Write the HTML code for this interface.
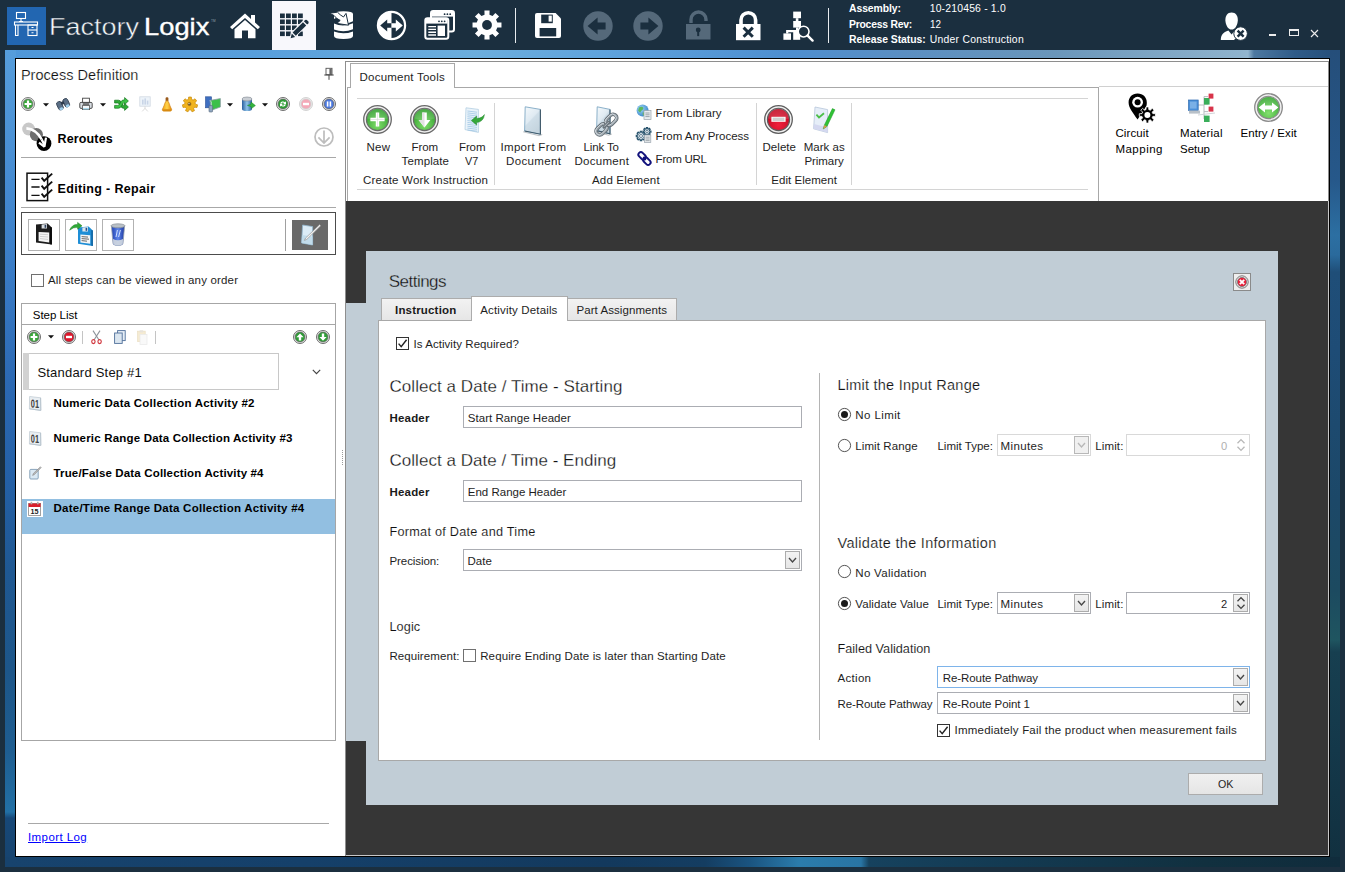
<!DOCTYPE html>
<html lang="en"><head><meta charset="utf-8"><title>FactoryLogix</title><style>
html,body{margin:0;padding:0;}
body{width:1345px;height:872px;overflow:hidden;background:#1b2f3f;position:relative;font-family:"Liberation Sans",sans-serif;}
div,span.t,svg{position:absolute;box-sizing:border-box;}
span.t{white-space:pre;display:block;}
svg{overflow:visible;}
</style></head><body>
<div style="left:5px;top:50px;width:1335px;height:817px;background:#2a65a8;"></div>
<div style="left:5px;top:50px;width:1335px;height:9px;background:linear-gradient(90deg,#4f97d9 0px,#589fdc 250px,#6caedd 470px,#5fa3dd 600px,#4e8fd0 780px,#5b8fc2 900px,#6a96ba 1050px,#8fb3cd 1235px,#93b6cf 1243px,#4d78a0 1249px,#2f5b88 1290px,#244d78 1335px);"></div>
<div style="left:5px;top:50px;width:11px;height:817px;background:linear-gradient(180deg,#569ddb 0px,#4a90d4 100px,#3a7cc6 220px,#2c69b3 330px,#2460a6 430px,#1f5892 520px,#1d5689 620px,#1e5d90 700px,#2270a5 762px,#174878 768px,#17436d 817px);"></div>
<div style="left:1330px;top:50px;width:10px;height:817px;background:linear-gradient(180deg,#254e7a 0px,#26588a 130px,#2c6fa2 185px,#2a6a9c 205px,#1f4e78 222px,#1e4c76 300px,#1c4868 450px,#1c4a60 540px,#1f5560 590px,#173f50 602px,#14384a 700px,#11303f 817px);"></div>
<div style="left:5px;top:857px;width:1335px;height:10px;background:linear-gradient(90deg,#17436d 0px,#15406a 300px,#13395d 600px,#143d61 700px,#1a5480 745px,#2b7cac 794px,#2975a4 856px,#16425e 864px,#133a52 1000px,#11303f 1200px,#102c3c 1335px);"></div>
<div style="left:15px;top:58px;width:1315px;height:799px;background:#000;"></div>
<div style="left:16px;top:59px;width:1313px;height:797px;background:#fff;"></div>
<div style="left:345px;top:61px;width:984px;height:795px;background:#8e8e8e;"></div>
<div style="left:346px;top:62px;width:982px;height:139px;background:#fff;"></div>
<div style="left:346px;top:201px;width:982px;height:654px;background:#363636;"></div>
<div style="left:1328px;top:201px;width:1px;height:655px;background:#c8c8c8;"></div>
<div style="left:346px;top:855px;width:983px;height:1px;background:#c8c8c8;"></div>
<div style="left:7px;top:7px;width:39px;height:38px;background:#2266b1;"></div>
<svg style="left:7px;top:7px" width="39" height="38" viewBox="0 0 39 38"><g fill="none" stroke="#fff" stroke-width="1.1"><rect x="9.5" y="5.5" width="9" height="6"/><path d="M14 11.5 V14.5 M12 14.5 H16"/><rect x="7.5" y="15" width="23" height="3"/><path d="M8.5 18 V28.5 H11 V18"/><rect x="21" y="18" width="9" height="10.5"/><path d="M21 23 H30"/><path d="M24.5 20.5 H26.5 M24.5 25.7 H26.5"/></g></svg>
<svg style="left:229px;top:12px" width="32" height="28" viewBox="0 0 32 28"><path d="M16 1.5 L1 15 L3.2 17.3 L16 6 L28.8 17.3 L31 15 L26 10.5 V3 H22 V7 Z" fill="#ffffff"/><path d="M16 8 L5.5 17.2 V26.2 H13 V18.5 H19 V26.2 H26.5 V17.2 Z" fill="#ffffff"/></svg>
<div style="left:272px;top:1px;width:44px;height:49px;background:#f8f8fc;"></div>
<svg style="left:279.5px;top:12.5px" width="30" height="27" viewBox="0 0 30 27"><rect x="0" y="0.5" width="4.8" height="4.6" fill="#1b2f3f"/><rect x="6" y="0.5" width="4.8" height="4.6" fill="#1b2f3f"/><rect x="12" y="0.5" width="4.8" height="4.6" fill="#1b2f3f"/><rect x="18" y="0.5" width="4.8" height="4.6" fill="#1b2f3f"/><rect x="0" y="6.5" width="4.8" height="4.6" fill="#1b2f3f"/><rect x="6" y="6.5" width="4.8" height="4.6" fill="#1b2f3f"/><rect x="12" y="6.5" width="4.8" height="4.6" fill="#1b2f3f"/><rect x="18" y="6.5" width="4.8" height="4.6" fill="#1b2f3f"/><rect x="0" y="12.5" width="4.8" height="4.6" fill="#1b2f3f"/><rect x="6" y="12.5" width="4.8" height="4.6" fill="#1b2f3f"/><rect x="12" y="12.5" width="4.8" height="4.6" fill="#1b2f3f"/><rect x="18" y="12.5" width="4.8" height="4.6" fill="#1b2f3f"/><rect x="0" y="18.5" width="4.8" height="4.6" fill="#1b2f3f"/><rect x="6" y="18.5" width="4.8" height="4.6" fill="#1b2f3f"/><rect x="12" y="18.5" width="4.8" height="4.6" fill="#1b2f3f"/><rect x="18" y="18.5" width="4.8" height="4.6" fill="#1b2f3f"/><path d="M9.5 26 L11 19.5 L24 6.5 L28.6 11 L15.6 24 Z" fill="#f8f8fc"/><path d="M10.6 25.3 L11.8 20.6 L15.2 24 Z" fill="#1b2f3f"/><path d="M12.6 19.6 L23 9.2 L26.2 12.4 L15.8 22.8 Z" fill="#1b2f3f"/><path d="M23.9 8.3 L25.2 7 Q26 6.3 26.8 7 L28.4 8.6 Q29 9.4 28.4 10.2 L27.1 11.5 Z" fill="#1b2f3f"/></svg>
<svg style="left:328px;top:10px" width="26" height="30" viewBox="0 0 26 30"><path d="M6 4 Q6 1.2 15.5 1.2 Q25 1.2 25 4 V11.2 Q20 14 14 13.4 L16.6 11.4 L13 9 L10.6 6.4 L6 9 Z" fill="#ffffff"/><path d="M6 13.5 Q15 17.5 25 13.2 V19.2 Q15.5 23 6 19.4 Z" fill="#ffffff"/><path d="M6 21.6 Q15.5 25.2 25 21.4 V26 Q25 29 15.5 29 Q6 29 6 26 Z" fill="#ffffff"/><path d="M1.5 3.2 L9.5 2.2 Q12 5 15.5 7 L18 3.4 L20.5 15.2 L8.8 13.4 L12.2 10.4 Q8 8.6 6.2 5.6 Z" fill="#ffffff" stroke="#1b2f3f" stroke-width="1"/></svg>
<svg style="left:376px;top:9.5px" width="31" height="31" viewBox="0 0 31 31"><circle cx="15.5" cy="15.5" r="13.6" fill="none" stroke="#ffffff" stroke-width="2.2"/><path d="M15.5 2 A13.5 13.5 0 0 0 15.5 29 Z" fill="#ffffff"/><path d="M4.2 15.5 L11.2 9.4 V13.2 H15.5 V17.8 H11.2 V21.6 Z" fill="#1b2f3f"/><path d="M26.8 15.5 L19.8 9.4 V13.2 H15.5 V17.8 H19.8 V21.6 Z" fill="#ffffff"/></svg>
<svg style="left:423.5px;top:10px" width="31" height="30" viewBox="0 0 31 30"><rect x="7" y="1" width="23" height="20.5" rx="2.2" fill="#1b2f3f" stroke="#ffffff" stroke-width="2"/><rect x="8" y="2" width="21" height="4.6" fill="#ffffff"/><circle cx="20.6" cy="4.2" r="0.9" fill="#1b2f3f"/><circle cx="23.4" cy="4.2" r="0.9" fill="#1b2f3f"/><circle cx="26.2" cy="4.2" r="0.9" fill="#1b2f3f"/><rect x="1.3" y="8.3" width="23" height="20.5" rx="2.2" fill="#1b2f3f" stroke="#ffffff" stroke-width="2"/><rect x="2" y="9" width="21.6" height="4.6" fill="#ffffff"/><circle cx="15" cy="11.3" r="0.9" fill="#1b2f3f"/><circle cx="17.8" cy="11.3" r="0.9" fill="#1b2f3f"/><circle cx="20.6" cy="11.3" r="0.9" fill="#1b2f3f"/><path d="M4.3 16.6 H12 M4.3 19.4 H12 M4.3 22.2 H12 M4.3 25 H12" stroke="#ffffff" stroke-width="1.4"/><rect x="13.6" y="15.6" width="7.4" height="10.4" fill="#ffffff"/></svg>
<svg style="left:472px;top:10px" width="30" height="30" viewBox="0 0 30 30"><path d="M12.43 0.53 L17.57 0.53 L17.46 4.69 L20.55 5.97 L23.41 2.95 L27.05 6.59 L24.03 9.45 L25.31 12.54 L29.47 12.43 L29.47 17.57 L25.31 17.46 L24.03 20.55 L27.05 23.41 L23.41 27.05 L20.55 24.03 L17.46 25.31 L17.57 29.47 L12.43 29.47 L12.54 25.31 L9.45 24.03 L6.59 27.05 L2.95 23.41 L5.97 20.55 L4.69 17.46 L0.53 17.57 L0.53 12.43 L4.69 12.54 L5.97 9.45 L2.95 6.59 L6.59 2.95 L9.45 5.97 L12.54 4.69 Z" fill="#ffffff"/><circle cx="15" cy="15" r="4.9" fill="#1b2f3f"/></svg>
<div style="left:514.6px;top:7.5px;width:1.3px;height:35.5px;background:#e8ecef;"></div>
<svg style="left:535px;top:13px" width="26" height="25" viewBox="0 0 26 25"><path d="M2 0 H20.6 L26 5.4 V23 Q26 25 24 25 H2 Q0 25 0 23 V2 Q0 0 2 0 Z" fill="#ffffff"/><rect x="6.2" y="1.6" width="11.6" height="8.6" fill="#1b2f3f"/><rect x="13.6" y="2.6" width="3.2" height="6" fill="#ffffff"/><rect x="4.6" y="15" width="16.6" height="8.4" fill="#1b2f3f"/></svg>
<svg style="left:583px;top:10.5px" width="30" height="30" viewBox="0 0 30 30"><circle cx="15" cy="15" r="14.7" fill="#55697a"/><path d="M4.6 15 L14.6 6.6 V11.4 H22.6 V18.6 H14.6 V23.4 Z" fill="#1b2f3f"/></svg>
<svg style="left:633px;top:10.5px" width="30" height="30" viewBox="0 0 30 30"><circle cx="15" cy="15" r="14.7" fill="#55697a"/><path d="M25.4 15 L15.4 6.6 V11.4 H7.4 V18.6 H15.4 V23.4 Z" fill="#1b2f3f"/></svg>
<svg style="left:686px;top:10.5px" width="25" height="29" viewBox="0 0 25 29"><path d="M5 12 V8.5 A7.5 7.5 0 0 1 20 8.5 V10" fill="none" stroke="#55697a" stroke-width="3.4"/><rect x="0" y="13" width="24.5" height="15.5" fill="#55697a"/><circle cx="12.2" cy="19" r="2.4" fill="#1b2f3f"/><rect x="11.2" y="19.5" width="2" height="5.6" fill="#1b2f3f"/></svg>
<svg style="left:736px;top:10.5px" width="25" height="30" viewBox="0 0 25 30"><path d="M5 14 V9 A7.3 7.3 0 0 1 19.6 9 V14" fill="none" stroke="#ffffff" stroke-width="3.6"/><rect x="0" y="13" width="24.5" height="16.2" fill="#ffffff"/><path d="M7.6 16.6 L16.8 25.8 M16.8 16.6 L7.6 25.8" stroke="#1b2f3f" stroke-width="3"/></svg>
<svg style="left:783px;top:10.5px" width="31" height="31" viewBox="0 0 31 31"><rect x="10.2" y="0.6" width="7.8" height="6.6" fill="#ffffff"/><rect x="12.8" y="7.2" width="2.6" height="3" fill="#ffffff"/><rect x="10.2" y="10" width="7.8" height="6.6" fill="#ffffff"/><path d="M14.1 16.6 V20 M4.2 22.6 V20.2 H16" stroke="#ffffff" stroke-width="2.2" fill="none"/><rect x="0.4" y="22.4" width="7.6" height="6.4" fill="#ffffff"/><rect x="10.2" y="20.6" width="7" height="8.2" fill="#ffffff"/><circle cx="20.6" cy="20.6" r="5.4" fill="#1b2f3f" stroke="#ffffff" stroke-width="1.6"/><path d="M24.6 24.6 L29.6 29.6" stroke="#ffffff" stroke-width="2.4" stroke-linecap="round"/></svg>
<div style="left:827.6px;top:7.5px;width:1.3px;height:35.5px;background:#e8ecef;"></div>
<svg style="left:1220px;top:12px" width="28" height="29" viewBox="0 0 28 29"><path d="M11.6 0.6 C7.4 0.6 5.2 4 5.4 8.4 C5.6 12.6 8 17.6 11.6 17.6 C15.2 17.6 17.6 12.6 17.8 8.4 C18 4 15.8 0.6 11.6 0.6 Z" fill="#ffffff"/><path d="M0.8 28 C1 22.6 3 20.4 8.4 18.4 L11.6 22.4 L14.8 18.4 C18 19.4 19 20 20.4 21.4 L14 28 Z" fill="#ffffff"/><circle cx="20.6" cy="21.6" r="6.8" fill="#ffffff" stroke="#1b2f3f" stroke-width="1"/><path d="M17.6 18.6 L23.6 24.6 M23.6 18.6 L17.6 24.6" stroke="#1b2f3f" stroke-width="2.4"/></svg>
<div style="left:1269px;top:34px;width:7.2px;height:2px;background:#ececec;"></div>
<div style="left:1289px;top:29px;width:9.6px;height:7.4px;border:1px solid #ececec;border-top-width:2px;"></div>
<svg style="left:1310px;top:28.5px" width="9" height="9" viewBox="0 0 9 9"><path d="M1 1 L8 8 M8 1 L1 8" stroke="#ececec" stroke-width="1.15"/></svg>
<svg style="left:324.4px;top:68px" width="10" height="12" viewBox="0 0 10 12"><rect x="2" y="0.3" width="6" height="6.4" fill="#fff" stroke="#555" stroke-width="0.9"/><rect x="5.4" y="0.6" width="2.4" height="6" fill="#666"/><path d="M0.3 7 H9.7 M5 7 V11.8" stroke="#444" stroke-width="1"/></svg>
<svg style="left:21px;top:97px" width="14" height="14" viewBox="0 0 14 14"><g opacity="1"><circle cx="7.0" cy="7.0" r="6.5" fill="#e9e9e9" stroke="#6e6e6e" stroke-width="0.9"/><circle cx="7.0" cy="7.0" r="4.9" fill="#3aa83a" stroke="#6e6e6e" stroke-width="0.7"/><path d="M7 3.6 V10.4 M3.6 7 H10.4" stroke="#fff" stroke-width="2.2"/></g></svg>
<svg style="left:42.5px;top:103px" width="6" height="4" viewBox="0 0 6 4"><path d="M0 0.3 H6 L3 3.6 Z" fill="#111"/></svg>
<svg style="left:56px;top:97px" width="14" height="14" viewBox="0 0 14 14"><g transform="rotate(-25 7 7)"><rect x="1" y="3" width="5" height="8.5" rx="2" fill="#5b6f86" stroke="#2e3c4e" stroke-width="0.8"/><rect x="8" y="3" width="5" height="8.5" rx="2" fill="#5b6f86" stroke="#2e3c4e" stroke-width="0.8"/><rect x="5.4" y="4.4" width="3.2" height="3" fill="#2e3c4e"/><ellipse cx="3.5" cy="10.6" rx="2" ry="1.4" fill="#9fd0ee"/><ellipse cx="10.5" cy="10.6" rx="2" ry="1.4" fill="#9fd0ee"/></g></svg>
<svg style="left:79px;top:97px" width="14" height="14" viewBox="0 0 14 14"><rect x="3.6" y="1.2" width="6.8" height="4.6" fill="#fff" stroke="#444" stroke-width="0.9"/><rect x="0.8" y="5.4" width="12.4" height="6" rx="1.2" fill="#d8dde2" stroke="#3c3c3c" stroke-width="0.9"/><rect x="3.4" y="8.6" width="7.2" height="4" fill="#f4f8fb" stroke="#555" stroke-width="0.8"/><rect x="3.8" y="6.3" width="6.4" height="1.5" fill="#555"/><rect x="4" y="11.2" width="6" height="1.2" fill="#9fd8ec"/></svg>
<svg style="left:100px;top:103px" width="6" height="4" viewBox="0 0 6 4"><path d="M0 0.3 H6 L3 3.6 Z" fill="#111"/></svg>
<svg style="left:113.5px;top:97px" width="15" height="14" viewBox="0 0 15 14"><path d="M0.6 3.2 H4.4 Q6.4 3.2 7.6 5.4 L8.6 7.2 Q9.4 8.8 10.6 8.8 V6.4 L14.4 10 L10.6 13.4 V11.4 Q7.6 11.4 6.6 9.4 L5.6 7.6 Q4.8 6 3.6 6 H0.6 Z" fill="#2faa36" stroke="#13751c" stroke-width="0.7"/><path d="M0.6 8.4 H3.6 Q4.8 8.4 5.6 7 L6.8 4.8 Q7.8 2.8 10.6 2.8 V0.6 L14.4 4 L10.6 7.6 V5.6 Q9.4 5.6 8.6 7 L7.6 9 Q6.4 11.2 4.4 11.2 H0.6 Z" fill="#3cc244" stroke="#13751c" stroke-width="0.7"/></svg>
<svg style="left:139px;top:96px" width="12" height="16" viewBox="0 0 12 16"><g opacity="0.55"><rect x="0.8" y="0.8" width="10.4" height="9.4" fill="#dfeaf5" stroke="#aebccd" stroke-width="0.8"/><rect x="3" y="3.6" width="1.6" height="5" fill="#9db4d4"/><rect x="5.4" y="2.4" width="1.6" height="6.2" fill="#9db4d4"/><rect x="7.8" y="4.6" width="1.6" height="4" fill="#9db4d4"/><path d="M6 10.2 V13 M6 12.4 L3.2 15.4 M6 12.4 L8.8 15.4" stroke="#b8b8b8" stroke-width="0.9" fill="none"/></g></svg>
<svg style="left:161px;top:97px" width="12" height="15" viewBox="0 0 12 15"><defs><linearGradient id="bl" x1="0" x2="1"><stop offset="0" stop-color="#f0a010"/><stop offset="0.5" stop-color="#ffd24a"/><stop offset="1" stop-color="#e88a08"/></linearGradient></defs><rect x="4.6" y="0.3" width="2.8" height="5" rx="1.2" fill="#9a5a1c"/><path d="M6 3.6 C3.6 4.6 3.6 8 2.2 10.6 Q1 12.6 1.4 13.2 H10.6 Q11 12.6 9.8 10.6 C8.4 8 8.4 4.6 6 3.6 Z" fill="url(#bl)" stroke="#c97a10" stroke-width="0.6"/><ellipse cx="6" cy="13.4" rx="4.6" ry="1.2" fill="#d88a10"/></svg>
<svg style="left:182px;top:97px" width="16" height="15" viewBox="0 0 16 15"><path d="M6.64 0.02 L9.36 0.02 L9.53 2.32 L11.10 3.08 L13.00 1.78 L14.69 3.90 L13.00 5.47 L13.39 7.16 L15.59 7.84 L14.99 10.49 L12.71 10.14 L11.63 11.50 L12.47 13.65 L10.02 14.83 L8.87 12.83 L7.13 12.83 L5.98 14.83 L3.53 13.65 L4.37 11.50 L3.29 10.14 L1.01 10.49 L0.41 7.84 L2.61 7.16 L3.00 5.47 L1.31 3.90 L3.00 1.78 L4.90 3.08 L6.47 2.32 Z" fill="#f0b420" stroke="#c98a0a" stroke-width="0.7"/><circle cx="7.4" cy="7" r="1.7" fill="#6e5a30" stroke="#b87a08" stroke-width="0.6"/><circle cx="7" cy="6.6" r="0.7" fill="#fff4d0"/></svg>
<svg style="left:204.5px;top:96px" width="17" height="17" viewBox="0 0 17 17"><rect x="0.5" y="0.8" width="6" height="11" fill="#3f6fc0" stroke="#2a4f96" stroke-width="0.6"/><path d="M5 4.4 L15.4 2.6 V11 L6.4 14.2 Z" fill="#3cc04a" stroke="#8ea0a8" stroke-width="0.8"/><path d="M5 4.4 L6.4 6 V14.2" fill="none" stroke="#dfe8ea" stroke-width="0.7"/><rect x="4" y="9.6" width="3.6" height="6.4" rx="0.8" fill="#8fa6c0" stroke="#55677a" stroke-width="0.6"/></svg>
<svg style="left:227px;top:103px" width="6" height="4" viewBox="0 0 6 4"><path d="M0 0.3 H6 L3 3.6 Z" fill="#111"/></svg>
<svg style="left:241px;top:96px" width="15" height="16" viewBox="0 0 15 16"><defs><linearGradient id="dbg" x1="0" x2="1"><stop offset="0" stop-color="#2d5f9e"/><stop offset="0.5" stop-color="#8fc4ea"/><stop offset="1" stop-color="#2d5f9e"/></linearGradient></defs><path d="M1 3 V13 Q1 15 6 15 Q11 15 11 13 V3 Z" fill="url(#dbg)"/><ellipse cx="6" cy="3" rx="5" ry="2" fill="#c9ced4" stroke="#7c858f" stroke-width="0.6"/><path d="M6.4 9.4 L10 8.2 V6 L14.4 9.6 L10.4 12.6 V10.8 Z" fill="#34b53e" stroke="#1c8a28" stroke-width="0.5"/></svg>
<svg style="left:262px;top:103px" width="6" height="4" viewBox="0 0 6 4"><path d="M0 0.3 H6 L3 3.6 Z" fill="#111"/></svg>
<svg style="left:276px;top:97px" width="14" height="14" viewBox="0 0 14 14"><g opacity="1"><circle cx="7.0" cy="7.0" r="6.5" fill="#e9e9e9" stroke="#5e5e5e" stroke-width="0.9"/><circle cx="7.0" cy="7.0" r="4.9" fill="#2e9e36" stroke="#5e5e5e" stroke-width="0.7"/><path d="M4.2 6.2 A3 3 0 0 1 9 5.2 L10 4.2 V7.2 H7 L8.1 6.1 A1.8 1.8 0 0 0 5.4 6.6 Z M9.8 7.8 A3 3 0 0 1 5 8.8 L4 9.8 V6.8 H7 L5.9 7.9 A1.8 1.8 0 0 0 8.6 7.4 Z" fill="#fff"/></g></svg>
<svg style="left:299px;top:97px" width="14" height="14" viewBox="0 0 14 14"><g opacity="1"><circle cx="7.0" cy="7.0" r="6.5" fill="#e9e9e9" stroke="#cfcfcf" stroke-width="0.9"/><circle cx="7.0" cy="7.0" r="4.9" fill="#f4a9b8" stroke="#cfcfcf" stroke-width="0.7"/><rect x="4" y="5.8" width="6" height="2.4" fill="#fff"/></g></svg>
<svg style="left:322px;top:97px" width="14" height="14" viewBox="0 0 14 14"><g opacity="1"><circle cx="7.0" cy="7.0" r="6.5" fill="#e9e9e9" stroke="#5e5e5e" stroke-width="0.9"/><circle cx="7.0" cy="7.0" r="4.9" fill="#4a78e0" stroke="#5e5e5e" stroke-width="0.7"/><rect x="4.8" y="4.4" width="1.6" height="5.2" fill="#fff"/><rect x="7.6" y="4.4" width="1.6" height="5.2" fill="#fff"/></g></svg>
<svg style="left:22px;top:121.5px" width="30" height="30" viewBox="0 0 30 30"><circle cx="6.6" cy="7" r="6.4" fill="#c8c8c8"/><circle cx="14.4" cy="12.6" r="6.6" fill="#6e6e6e"/><circle cx="22" cy="21.6" r="7.4" fill="#000"/><path d="M4.4 6.4 Q14 7 19.6 17.4" fill="none" stroke="#fff" stroke-width="2.6"/><path d="M24 15.6 L22.4 24.8 M17 20.6 L22.6 25" fill="none" stroke="#fff" stroke-width="2.2"/><path d="M19.6 17.4 Q21.6 20.6 22.2 23.6" fill="none" stroke="#fff" stroke-width="2.4"/></svg>
<svg style="left:314px;top:127px" width="20" height="20" viewBox="0 0 20 20"><circle cx="10" cy="10" r="9" fill="none" stroke="#bdbdbd" stroke-width="1.7"/><path d="M10 3.6 V15.6 M4.4 10.4 L10 16 L15.6 10.4" fill="none" stroke="#bdbdbd" stroke-width="1.7"/></svg>
<div style="left:21px;top:157px;width:315px;height:1px;background:#a8a8a8;"></div>
<svg style="left:25.5px;top:172px" width="27" height="30" viewBox="0 0 27 30"><rect x="1" y="1.2" width="20.6" height="27.4" fill="#fff" stroke="#111" stroke-width="1.5"/><path d="M5.4 7.4 H13.6 M5.4 15 H13.6 M5.4 23.4 H13.6" stroke="#111" stroke-width="1.3"/><path d="M15.6 5.6 L18.2 8.8 L26.2 1.6 M15.6 13.6 L18.2 16.8 L26.2 9.6 M15.6 21.6 L18.2 24.8 L26.2 17.6" fill="none" stroke="#111" stroke-width="1.9"/></svg>
<div style="left:21px;top:207px;width:315px;height:1px;background:#a8a8a8;"></div>
<div style="left:21px;top:212px;width:315px;height:43px;background:#fff;border:1px solid #4c4c4c;"></div>
<div style="left:28px;top:219px;width:32px;height:32px;background:#fff;border:1px solid #b2b2b2;"></div>
<div style="left:65px;top:219px;width:32px;height:32px;background:#fff;border:1px solid #b2b2b2;"></div>
<div style="left:102px;top:219px;width:32px;height:32px;background:#fff;border:1px solid #b2b2b2;"></div>
<svg style="left:35px;top:223px" width="18" height="23" viewBox="0 0 18 23"><path d="M1 1.6 L12.6 0.6 L16.8 4.4 V21.6 L1 19.4 Z" fill="#1c1c1c"/><path d="M16.8 4.4 V21.6 L15.4 21.4 V4 Z" fill="#000"/><path d="M3.6 9 L14.2 9.6 V19.4 L3.6 18 Z" fill="#f4f4f4"/><path d="M5 11.2 L13 11.7 M5 13.4 L13 14 M5 15.6 L13 16.4" stroke="#bbb" stroke-width="0.7"/><path d="M6.6 1.4 L12 1 V5.6 L6.6 5.6 Z" fill="#d8dde2"/><rect x="9.6" y="1.8" width="1.6" height="3" fill="#2c3f5a"/></svg>
<svg style="left:69px;top:222px" width="26" height="25" viewBox="0 0 26 25"><path d="M9 5.6 L19.6 4.6 L23.8 8.4 V24 L9 21.8 Z" fill="#1e8ed6"/><path d="M23.8 8.4 V24 L22.4 23.8 V8 Z" fill="#0d5e9a"/><path d="M11.4 12.6 L21.2 13.2 V21.8 L11.4 20.4 Z" fill="#f6f6f6"/><path d="M12.6 14.6 L19 15.1 M12.6 16.6 L20 17.2 M12.6 18.6 L18 19.2" stroke="#444" stroke-width="0.8"/><path d="M13.4 5.4 L19 5 V9.6 L13.4 9.6 Z" fill="#dfe6ec"/><rect x="16.6" y="5.8" width="1.6" height="3" fill="#1c4f8a"/><path d="M0.6 8.2 Q3 2.2 8.6 2.4 V0.4 L13 3.8 L8.6 7.2 V5.4 Q4.4 5 0.6 8.2 Z" fill="#2faa36" stroke="#1c7a24" stroke-width="0.5"/></svg>
<svg style="left:110px;top:222.5px" width="16" height="24" viewBox="0 0 16 24"><defs><linearGradient id="tb" x1="0" x2="1"><stop offset="0" stop-color="#1f3fb0"/><stop offset="0.5" stop-color="#5f86ea"/><stop offset="1" stop-color="#1a36a0"/></linearGradient></defs><path d="M1.4 3 L3 20.4 Q3.2 22.4 8 22.4 Q12.8 22.4 13 20.4 L14.6 3 Z" fill="url(#tb)" stroke="#9aa4ae" stroke-width="0.8"/><ellipse cx="8" cy="2.8" rx="7" ry="2" fill="#b9c0c6" stroke="#858d95" stroke-width="0.7"/><path d="M3 16 Q8 18.4 13 16 L12.8 20.4 Q12.6 22.2 8 22.2 Q3.4 22.2 3.2 20.4 Z" fill="#d4dae0" opacity="0.9"/><path d="M7.4 7 L6 14 M10.4 7 L8.6 14" stroke="#cfe0ff" stroke-width="1"/></svg>
<div style="left:285px;top:219px;width:1px;height:32px;background:#a0a0a0;"></div>
<div style="left:292px;top:220px;width:36px;height:30px;background:#696969;"></div>
<svg style="left:300px;top:223px" width="22" height="24" viewBox="0 0 22 24"><path d="M2.6 2 L12.6 3.6 V22 L1.6 20 Z" fill="#dcecf6" stroke="#8fb4cc" stroke-width="0.8"/><path d="M2 12 L12.6 13.6 V22 L1.6 20 Z" fill="#bcd8e8" opacity="0.8"/><path d="M4.4 17.4 L5.6 15 L19.6 1.6 L20.8 2.8 L6.8 16.4 Z" fill="#f0f0f0" stroke="#8a8a8a" stroke-width="0.6"/></svg>
<div style="left:31px;top:274px;width:13px;height:13px;background:#fff;border:1px solid #707070;"></div>
<div style="left:21px;top:303px;width:315px;height:438px;background:#fff;border:1px solid #a6a6a6;"></div>
<div style="left:21px;top:324px;width:315px;height:1px;background:#a6a6a6;"></div>
<svg style="left:27px;top:330px" width="14" height="14" viewBox="0 0 14 14"><g opacity="1"><circle cx="7.0" cy="7.0" r="6.5" fill="#e9e9e9" stroke="#5e5e5e" stroke-width="0.9"/><circle cx="7.0" cy="7.0" r="4.9" fill="#3aa83a" stroke="#5e5e5e" stroke-width="0.7"/><path d="M7 3.6 V10.4 M3.6 7 H10.4" stroke="#fff" stroke-width="2.2"/></g></svg>
<svg style="left:48px;top:335.4px" width="6" height="4" viewBox="0 0 6 4"><path d="M0 0.3 H6 L3 3.6 Z" fill="#111"/></svg>
<svg style="left:62px;top:330px" width="14" height="14" viewBox="0 0 14 14"><g opacity="1"><circle cx="7.0" cy="7.0" r="6.5" fill="#e9e9e9" stroke="#5e5e5e" stroke-width="0.9"/><circle cx="7.0" cy="7.0" r="4.9" fill="#e0162b" stroke="#5e5e5e" stroke-width="0.7"/><rect x="4" y="5.8" width="6" height="2.4" fill="#fff"/></g></svg>
<div style="left:82px;top:331px;width:1px;height:13px;background:#c4c4c4;"></div>
<svg style="left:90.5px;top:330px" width="11" height="14" viewBox="0 0 11 14"><path d="M2 0.6 L8 10 M9 0.6 L3 10" stroke="#8e959c" stroke-width="1.1" fill="none"/><ellipse cx="2.4" cy="11.6" rx="1.7" ry="2" fill="none" stroke="#d0343c" stroke-width="1.1"/><ellipse cx="8.6" cy="11.6" rx="1.7" ry="2" fill="none" stroke="#d0343c" stroke-width="1.1"/></svg>
<svg style="left:114px;top:330px" width="12" height="14" viewBox="0 0 12 14"><rect x="3.6" y="0.6" width="7.6" height="10" fill="#e6eef6" stroke="#4f6f9a" stroke-width="0.9"/><rect x="0.6" y="3" width="7.6" height="10.4" fill="#dbe6f0" stroke="#4f6f9a" stroke-width="0.9"/></svg>
<svg style="left:137px;top:329.5px" width="11" height="15" viewBox="0 0 11 15"><g opacity="0.5"><rect x="0.6" y="1.2" width="7.6" height="10.4" fill="#ecd9a6" stroke="#d8c08a" stroke-width="0.7"/><rect x="2.6" y="0.3" width="3.6" height="2" fill="#d0c8b8"/><rect x="3" y="4.4" width="7" height="10" fill="#f4f4f4" stroke="#d4d4d4" stroke-width="0.7"/></g></svg>
<div style="left:155px;top:331px;width:1px;height:13px;background:#c4c4c4;"></div>
<svg style="left:293px;top:330px" width="14" height="14" viewBox="0 0 14 14"><g opacity="1"><circle cx="7.0" cy="7.0" r="6.5" fill="#e9e9e9" stroke="#5e5e5e" stroke-width="0.9"/><circle cx="7.0" cy="7.0" r="4.9" fill="#2e9e36" stroke="#5e5e5e" stroke-width="0.7"/><path d="M7 3.4 L10.6 7.2 H8.2 V10.6 H5.8 V7.2 H3.4 Z" fill="#fff"/></g></svg>
<svg style="left:316px;top:330px" width="14" height="14" viewBox="0 0 14 14"><g opacity="1"><circle cx="7.0" cy="7.0" r="6.5" fill="#e9e9e9" stroke="#5e5e5e" stroke-width="0.9"/><circle cx="7.0" cy="7.0" r="4.9" fill="#2e9e36" stroke="#5e5e5e" stroke-width="0.7"/><path d="M7 10.8 L10.6 7 H8.2 V3.6 H5.8 V7 H3.4 Z" fill="#fff"/></g></svg>
<div style="left:23px;top:353px;width:256px;height:37px;background:#fff;border:1px solid #c8c8c8;"></div>
<div style="left:23px;top:353px;width:6px;height:37px;background:#d2d2d2;"></div>
<svg style="left:312px;top:369px" width="9" height="6" viewBox="0 0 9 6"><path d="M0.8 0.8 L4.5 4.6 L8.2 0.8" fill="none" stroke="#444" stroke-width="1.15"/></svg>
<svg style="left:29px;top:396px" width="13" height="15" viewBox="0 0 13 15"><path d="M0.6 0.5 L11.6 1.8 L11.8 14.4 L0.4 12.8 Z" fill="#e9eef2" stroke="#c4ced6" stroke-width="0.8"/><path d="M11.6 1.8 L11.8 14.4 L0.4 12.8" fill="none" stroke="#b4c2cc" stroke-width="0.9"/><text x="1.8" y="11.4" style="font-family:Liberation Sans,sans-serif;font-size:11.5px;font-weight:bold" fill="#3c3c3c" textLength="8.2" lengthAdjust="spacingAndGlyphs" transform="skewY(4)">01</text></svg>
<svg style="left:29px;top:431px" width="13" height="15" viewBox="0 0 13 15"><path d="M0.6 0.5 L11.6 1.8 L11.8 14.4 L0.4 12.8 Z" fill="#e9eef2" stroke="#c4ced6" stroke-width="0.8"/><path d="M11.6 1.8 L11.8 14.4 L0.4 12.8" fill="none" stroke="#b4c2cc" stroke-width="0.9"/><text x="1.8" y="11.4" style="font-family:Liberation Sans,sans-serif;font-size:11.5px;font-weight:bold" fill="#3c3c3c" textLength="8.2" lengthAdjust="spacingAndGlyphs" transform="skewY(4)">01</text></svg>
<svg style="left:29px;top:466px" width="13" height="14" viewBox="0 0 13 14"><rect x="0.8" y="3.4" width="8.4" height="9.6" rx="1" fill="#dbe9f4" stroke="#7d9ab4" stroke-width="0.9"/><path d="M3.6 9.4 L4.4 7.4 L11.4 0.8 L12.2 1.6 L5.4 8.6 Z" fill="#b8b8b8" stroke="#8a8a8a" stroke-width="0.6"/></svg>
<div style="left:22px;top:499px;width:313px;height:35px;background:#92bfe1;"></div>
<svg style="left:27px;top:501px" width="16" height="16" viewBox="0 0 16 16"><rect x="0" y="0" width="16" height="16" fill="#fff"/><rect x="1.6" y="2.4" width="12" height="12" fill="#fff" stroke="#8a8a8a" stroke-width="0.8"/><rect x="1.6" y="2.4" width="12" height="3.6" fill="#d8202c"/><rect x="3.6" y="0.8" width="1.6" height="2.6" fill="#b0b0b0"/><rect x="10" y="0.8" width="1.6" height="2.6" fill="#b0b0b0"/><text x="3.6" y="13" style="font-family:Liberation Sans,sans-serif;font-size:7.6px;font-weight:bold" fill="#222" textLength="8" lengthAdjust="spacingAndGlyphs">15</text></svg>
<div style="left:28px;top:823px;width:301px;height:1px;background:#a8a8a8;"></div>
<div style="left:342px;top:450px;width:1px;height:15px;background:repeating-linear-gradient(#9a9a9a 0 1px,#fff 1px 2px);"></div>
<div style="left:347px;top:87px;width:752px;height:114px;background:#fff;border:1px solid #a8a8a8;border-bottom:none;"></div>
<div style="left:350px;top:63px;width:105px;height:25px;background:#fff;border:1px solid #a8a8a8;border-bottom:none;"></div>
<div style="left:1099px;top:86px;width:229px;height:115px;background:#fff;border-top:1px solid #d0d0d0;"></div>
<div style="left:357px;top:98px;width:731px;height:1px;background:#d4d4d4;"></div>
<div style="left:357px;top:189px;width:731px;height:1px;background:#d4d4d4;"></div>
<div style="left:494px;top:103px;width:1px;height:82px;background:#d4d4d4;"></div>
<div style="left:756px;top:103px;width:1px;height:82px;background:#d4d4d4;"></div>
<div style="left:851px;top:103px;width:1px;height:82px;background:#d4d4d4;"></div>
<svg style="left:363px;top:105px" width="29" height="29" viewBox="0 0 29 29"><defs><radialGradient id="g363" cx="0.5" cy="0.75" r="0.7"><stop offset="0" stop-color="#7fdc6a"/><stop offset="1" stop-color="#2f9e2c"/></radialGradient></defs><circle cx="14.5" cy="14.5" r="13.8" fill="#f0f0f0" stroke="#6a6a6a" stroke-width="1.3"/><circle cx="14.5" cy="14.5" r="11.1" fill="url(#g363)" stroke="#6a6a6a" stroke-width="1.1"/><path d="M4.199999999999999 13.5 A10.3 10.3 0 0 1 24.8 13.5 Q14.5 17.0 4.199999999999999 13.5 Z" fill="#fff" opacity="0.13"/><path d="M14.5 7.4 V21.6 M7.4 14.5 H21.6" stroke="#fff" stroke-width="3.4"/><path d="M14.5 8 V21 M8 14.5 H21" stroke="#d8d8d8" stroke-width="0.6"/></svg>
<svg style="left:410px;top:105px" width="29" height="29" viewBox="0 0 29 29"><defs><radialGradient id="g410" cx="0.5" cy="0.75" r="0.7"><stop offset="0" stop-color="#7fdc6a"/><stop offset="1" stop-color="#2f9e2c"/></radialGradient></defs><circle cx="14.5" cy="14.5" r="13.8" fill="#f0f0f0" stroke="#6a6a6a" stroke-width="1.3"/><circle cx="14.5" cy="14.5" r="11.1" fill="url(#g410)" stroke="#6a6a6a" stroke-width="1.1"/><path d="M4.199999999999999 13.5 A10.3 10.3 0 0 1 24.8 13.5 Q14.5 17.0 4.199999999999999 13.5 Z" fill="#fff" opacity="0.13"/><path d="M14.5 22.4 L8.6 15 H12.2 V7.4 H16.8 V15 H20.4 Z" fill="#fff"/><path d="M14.5 22.4 L8.6 15 H12.2 V7.4 H14.5 Z" fill="#e2e2e2"/></svg>
<svg style="left:464px;top:106.5px" width="22" height="27" viewBox="0 0 22 27"><path d="M2 0.8 L14.4 2.4 V25.4 L1 22.6 Z" fill="#eaf3fa" stroke="#b4cfe2" stroke-width="0.8"/><path d="M3.4 4.0 L13 5.2" stroke="#9fc6e4" stroke-width="0.8"/><path d="M3.4 5.9 L13 7.1" stroke="#9fc6e4" stroke-width="0.8"/><path d="M3.4 7.8 L13 9.0" stroke="#9fc6e4" stroke-width="0.8"/><path d="M3.4 9.7 L13 10.9" stroke="#9fc6e4" stroke-width="0.8"/><path d="M3.4 11.6 L13 12.8" stroke="#9fc6e4" stroke-width="0.8"/><path d="M3.4 13.5 L13 14.7" stroke="#9fc6e4" stroke-width="0.8"/><path d="M3.4 15.4 L13 16.6" stroke="#9fc6e4" stroke-width="0.8"/><path d="M3.4 17.3 L13 18.5" stroke="#9fc6e4" stroke-width="0.8"/><path d="M3.4 19.2 L13 20.4" stroke="#9fc6e4" stroke-width="0.8"/><path d="M3.4 21.1 L13 22.3" stroke="#9fc6e4" stroke-width="0.8"/><path d="M3.4 23.0 L13 24.2" stroke="#9fc6e4" stroke-width="0.8"/><path d="M7.4 13.6 L12.6 9 V11.4 Q17.6 11.6 20.4 7.6 Q19.6 14.8 12.6 15.6 V18 Z" fill="#35a83a" stroke="#1f8428" stroke-width="0.5"/></svg>
<svg style="left:523px;top:105.5px" width="26" height="31" viewBox="0 0 26 31"><defs><linearGradient id="dc523" x1="0" y1="0" x2="0.6" y2="1"><stop offset="0" stop-color="#f4f9fc"/><stop offset="0.5" stop-color="#dfeaf2"/><stop offset="0.55" stop-color="#cfdee8"/><stop offset="1" stop-color="#c4d4de"/></linearGradient></defs><path d="M0.2 25.8 L16 29.6 L19.2 28.4" fill="none" stroke="#8c9499" stroke-width="1.1" opacity="0.55"/><path d="M2.2 0.8 L17.4 3.4 V28.2 L1.6 25 Z" fill="url(#dc523)" stroke="#7fa8c4" stroke-width="0.9"/><path d="M17.4 3.4 V28.2 L1.6 25" fill="none" stroke="#3f5868" stroke-width="1.1"/></svg>
<svg style="left:595px;top:105.5px" width="23.6" height="30.6" viewBox="0 0 23.6 30.6"><defs><linearGradient id="dc595" x1="0" y1="0" x2="0.6" y2="1"><stop offset="0" stop-color="#f4f9fc"/><stop offset="0.5" stop-color="#dfeaf2"/><stop offset="0.55" stop-color="#cfdee8"/><stop offset="1" stop-color="#c4d4de"/></linearGradient></defs><path d="M0.2 25.400000000000002 L13.6 29.200000000000003 L16.8 28.0" fill="none" stroke="#8c9499" stroke-width="1.1" opacity="0.55"/><path d="M2.2 0.8 L15.0 3.4 V27.8 L1.6 24.6 Z" fill="url(#dc595)" stroke="#7fa8c4" stroke-width="0.9"/><path d="M15.0 3.4 V27.8 L1.6 24.6" fill="none" stroke="#3f5868" stroke-width="1.1"/><g transform="rotate(-45 6.6 23.4)" fill="none"><rect x="0.2999999999999998" y="19.7" width="12.6" height="7.4" rx="3.7" stroke="#5a646b" stroke-width="3.6"/><rect x="0.2999999999999998" y="19.7" width="12.6" height="7.4" rx="3.7" stroke="#98a2a9" stroke-width="2.2"/><rect x="-1.6653345369377348e-16" y="19.2" width="12.6" height="7.4" rx="3.7" stroke="#d3dadf" stroke-width="0.9"/></g><g transform="rotate(-45 16.2 13.8)" fill="none"><rect x="9.899999999999999" y="10.100000000000001" width="12.6" height="7.4" rx="3.7" stroke="#5a646b" stroke-width="3.6"/><rect x="9.899999999999999" y="10.100000000000001" width="12.6" height="7.4" rx="3.7" stroke="#98a2a9" stroke-width="2.2"/><rect x="9.599999999999998" y="9.600000000000001" width="12.6" height="7.4" rx="3.7" stroke="#d3dadf" stroke-width="0.9"/></g><path d="M9 21 L13.8 16.2" stroke="#6a747b" stroke-width="3.2" stroke-linecap="round"/><path d="M9.4 20.4 L13.4 16.4" stroke="#b4bdc3" stroke-width="1" stroke-linecap="round"/></svg>
<svg style="left:636px;top:104px" width="16" height="16" viewBox="0 0 16 16"><defs><radialGradient id="gl" cx="0.35" cy="0.35" r="0.8"><stop offset="0" stop-color="#9fd8f4"/><stop offset="1" stop-color="#2a78c4"/></radialGradient></defs><circle cx="6.6" cy="6.6" r="6" fill="url(#gl)"/><path d="M3 3.6 Q5 2 7 3.2 Q8 5 6.4 6 Q4.6 6.6 4.4 8.6 Q3 8 2.2 6.4 Z M6.6 8.6 Q8.6 8 9.4 9.6 Q8.6 11.6 7 11.8 Z" fill="#5cb85c"/><rect x="8" y="6.6" width="7" height="8.8" fill="#e9edf0" stroke="#9aa4ad" stroke-width="0.7"/><path d="M9.4 9 H13.6 M9.4 10.8 H13.6 M9.4 12.6 H13.6" stroke="#7a848c" stroke-width="0.7"/></svg>
<svg style="left:636px;top:127px" width="16" height="16" viewBox="0 0 16 16"><path d="M4.25 4.26 L5.75 4.26 L5.85 5.71 L6.73 6.07 L7.82 5.12 L8.88 6.18 L7.93 7.27 L8.29 8.15 L9.74 8.25 L9.74 9.75 L8.29 9.85 L7.93 10.73 L8.88 11.82 L7.82 12.88 L6.73 11.93 L5.85 12.29 L5.75 13.74 L4.25 13.74 L4.15 12.29 L3.27 11.93 L2.18 12.88 L1.12 11.82 L2.07 10.73 L1.71 9.85 L0.26 9.75 L0.26 8.25 L1.71 8.15 L2.07 7.27 L1.12 6.18 L2.18 5.12 L3.27 6.07 L4.15 5.71 Z" fill="#dfe8ee" stroke="#24506a" stroke-width="1.1"/><circle cx="5" cy="9" r="1.5" fill="#fff" stroke="#2f566e" stroke-width="0.7"/><path d="M10.37 0.65 L11.63 0.65 L11.70 1.89 L12.43 2.19 L13.35 1.36 L14.24 2.25 L13.41 3.17 L13.71 3.90 L14.95 3.97 L14.95 5.23 L13.71 5.30 L13.41 6.03 L14.24 6.95 L13.35 7.84 L12.43 7.01 L11.70 7.31 L11.63 8.55 L10.37 8.55 L10.30 7.31 L9.57 7.01 L8.65 7.84 L7.76 6.95 L8.59 6.03 L8.29 5.30 L7.05 5.23 L7.05 3.97 L8.29 3.90 L8.59 3.17 L7.76 2.25 L8.65 1.36 L9.57 2.19 L10.30 1.89 Z" fill="#dfe8ee" stroke="#24506a" stroke-width="1.1"/><circle cx="11" cy="4.6" r="1.2" fill="#fff" stroke="#2f566e" stroke-width="0.7"/><rect x="8.4" y="8" width="6.4" height="7.4" fill="#e4e8ea" stroke="#9aa4ad" stroke-width="0.7"/><path d="M9.6 10.2 H13.6 M9.6 12 H13.6 M9.6 13.6 H13.6" stroke="#7a848c" stroke-width="0.6"/></svg>
<svg style="left:636.5px;top:150.5px" width="15" height="15" viewBox="0 0 15 15"><g fill="none" stroke="#12127c" stroke-width="1.9"><rect x="0.9" y="2.3" width="8.4" height="5" rx="2.5" transform="rotate(45 5.1 4.8)"/><rect x="5.7" y="7.7" width="8.4" height="5" rx="2.5" transform="rotate(45 9.9 10.2)"/><path d="M6.2 6 L8.8 9" stroke-width="1.6"/></g></svg>
<svg style="left:764px;top:105px" width="29" height="29" viewBox="0 0 29 29"><defs><radialGradient id="g764" cx="0.5" cy="0.75" r="0.7"><stop offset="0" stop-color="#f0203c"/><stop offset="1" stop-color="#c00822"/></radialGradient></defs><circle cx="14.5" cy="14.5" r="13.8" fill="#f0f0f0" stroke="#5e5e5e" stroke-width="1.3"/><circle cx="14.5" cy="14.5" r="11.1" fill="url(#g764)" stroke="#5e5e5e" stroke-width="1.1"/><path d="M4.199999999999999 13.5 A10.3 10.3 0 0 1 24.8 13.5 Q14.5 17.0 4.199999999999999 13.5 Z" fill="#fff" opacity="0.13"/><rect x="7.4" y="11.8" width="14.2" height="5" fill="#fff"/><rect x="8.6" y="12.6" width="11.8" height="3.4" fill="#cfcfcf"/></svg>
<svg style="left:813px;top:105.5px" width="23" height="28" viewBox="0 0 23 28"><path d="M2 1 L14.6 3.6 V26.6 L0.6 22.8 Z" fill="#e6eef8" stroke="#b7c6da" stroke-width="0.8"/><path d="M1 18 L14.6 21.6 V26.6 L0.6 22.8 Z" fill="#d4d8f0"/><path d="M3.4 8.6 L6 11.4 L11 7.2" fill="none" stroke="#4cbf48" stroke-width="1.8"/><path d="M10.2 23 L11.4 19 L19.4 2.6 L22 3.8 L14 20.4 Z" fill="#2fc234" stroke="#1e9428" stroke-width="0.5"/><path d="M10.2 23 L11.4 19 L14 20.4 Z" fill="#d89a50"/></svg>
<svg style="left:1128px;top:93px" width="28" height="31" viewBox="0 0 28 31"><path d="M9.6 0.6 C4 0.6 0.6 4.6 0.6 9.4 C0.6 14.6 5 19.6 9.6 26.6 C11 24.4 12.4 22.4 13.6 20.6 L18.4 13 C18.8 11.6 18.8 10.6 18.8 9.4 C18.8 4.6 15.2 0.6 9.6 0.6 Z" fill="#000"/><circle cx="9.6" cy="9.2" r="5.4" fill="#fff"/><circle cx="9.6" cy="9.2" r="3" fill="#000"/><path d="M18.12 13.90 L20.68 13.90 L20.79 16.58 L22.25 17.18 L24.22 15.37 L26.03 17.18 L24.22 19.15 L24.82 20.61 L27.50 20.72 L27.50 23.28 L24.82 23.39 L24.22 24.85 L26.03 26.82 L24.22 28.63 L22.25 26.82 L20.79 27.42 L20.68 30.10 L18.12 30.10 L18.01 27.42 L16.55 26.82 L14.58 28.63 L12.77 26.82 L14.58 24.85 L13.98 23.39 L11.30 23.28 L11.30 20.72 L13.98 20.61 L14.58 19.15 L12.77 17.18 L14.58 15.37 L16.55 17.18 L18.01 16.58 Z" fill="#000" stroke="#fff" stroke-width="0.8"/><circle cx="19.4" cy="22" r="3" fill="#fff"/></svg>
<svg style="left:1188px;top:93px" width="29" height="30" viewBox="0 0 29 30"><path d="M10 12 H16 M16 3.6 V26 M16 3.6 H20 M16 11 H20 M16 18.6 H20 M16 26 H20" fill="none" stroke="#b8bcc0" stroke-width="1"/><rect x="0.6" y="7" width="9.6" height="10.4" fill="#4a8fd8" stroke="#2a68b0" stroke-width="0.7"/><rect x="2" y="8.6" width="6.6" height="7" fill="#7ab0e6"/><rect x="1" y="17.6" width="11" height="3" fill="#b8c0c8"/><rect x="16" y="5" width="5.6" height="6.6" fill="#3aae5a"/><rect x="20.6" y="0.6" width="4.8" height="5" fill="#d8344a"/><rect x="20.6" y="13.6" width="4.8" height="5" fill="#d8344a"/><rect x="16" y="22.6" width="5.6" height="6.4" fill="#3aae5a"/><path d="M10 22 L27 20" stroke="#d0d4d8" stroke-width="1"/></svg>
<svg style="left:1253.5px;top:93px" width="29" height="29" viewBox="0 0 29 29"><defs><radialGradient id="g1253" cx="0.5" cy="0.75" r="0.7"><stop offset="0" stop-color="#84df70"/><stop offset="1" stop-color="#35a630"/></radialGradient></defs><circle cx="14.5" cy="14.5" r="13.8" fill="#f0f0f0" stroke="#8a8a8a" stroke-width="1.3"/><circle cx="14.5" cy="14.5" r="11.1" fill="url(#g1253)" stroke="#8a8a8a" stroke-width="1.1"/><path d="M4.199999999999999 13.5 A10.3 10.3 0 0 1 24.8 13.5 Q14.5 17.0 4.199999999999999 13.5 Z" fill="#fff" opacity="0.13"/><path d="M4.6 14.5 L11 9.4 V12.4 H18 V9.4 L24.4 14.5 L18 19.6 V16.6 H11 V19.6 Z" fill="#fff"/></svg>
<div style="left:366px;top:251px;width:912px;height:554px;background:#c1cdd6;"></div>
<div style="left:346px;top:303px;width:20px;height:438px;background:#c1cdd6;"></div>
<div style="left:1233px;top:273px;width:18px;height:18px;background:#efefef;border:1px solid #8a8a8a;"></div>
<svg style="left:1235px;top:275px" width="14" height="14" viewBox="0 0 14 14"><circle cx="7" cy="7" r="6.2" fill="#f4f4f4" stroke="#666" stroke-width="0.9"/><circle cx="7" cy="7" r="4.6" fill="#e8203a" stroke="#777" stroke-width="0.8"/><path d="M4.8 4.8 L9.2 9.2 M9.2 4.8 L4.8 9.2" stroke="#fff" stroke-width="1.9"/></svg>
<div style="left:381px;top:298px;width:91px;height:23px;background:linear-gradient(#f2f2f2,#e6e6e6);border:1px solid #acacac;"></div>
<div style="left:567px;top:298px;width:110px;height:23px;background:linear-gradient(#f2f2f2,#e6e6e6);border:1px solid #acacac;"></div>
<div style="left:378px;top:320px;width:888px;height:441px;background:#fff;border:1px solid #a8a8a8;"></div>
<div style="left:471px;top:296px;width:97px;height:25px;background:#fff;border:1px solid #acacac;border-bottom:none;"></div>
<div style="left:396px;top:337px;width:13px;height:13px;background:#fff;border:1px solid #333;"></div><svg style="left:396px;top:337px" width="13" height="13" viewBox="0 0 13 13"><path d="M2.6 6.6 L5.2 9.6 L10.6 2.8" fill="none" stroke="#222" stroke-width="1.45"/></svg>
<div style="left:463px;top:406px;width:339px;height:22px;background:#fff;border:1px solid #abadb3;"></div>
<div style="left:463px;top:480px;width:339px;height:22px;background:#fff;border:1px solid #abadb3;"></div>
<div style="left:463px;top:549px;width:339px;height:22px;background:#fff;border:1px solid #abadb3;"></div><div style="left:785px;top:551px;width:15px;height:18px;background:linear-gradient(#f3f3f3,#e6e6e6);border:1px solid #acacac;"></div><svg style="left:788.0px;top:557.2px" width="9" height="6" viewBox="0 0 9 6"><path d="M1 1 L4.5 5 L8 1" fill="none" stroke="#484848" stroke-width="1.35" stroke-linecap="butt"/></svg>
<div style="left:463px;top:649px;width:13px;height:13px;background:#fff;border:1px solid #707070;"></div>
<div style="left:819px;top:373px;width:1px;height:367px;background:#b4b4b4;"></div>
<svg style="left:836.5px;top:407.0px" width="15" height="15" viewBox="0 0 15 15"><circle cx="7.5" cy="7.5" r="6.1" fill="#fff" stroke="#4a4a4a" stroke-width="0.95"/><circle cx="7.5" cy="7.5" r="3.5" fill="#1a1a1a"/></svg>
<svg style="left:836.5px;top:437.8px" width="15" height="15" viewBox="0 0 15 15"><circle cx="7.5" cy="7.5" r="6.1" fill="#fff" stroke="#4a4a4a" stroke-width="0.95"/></svg>
<svg style="left:836.5px;top:564.3px" width="15" height="15" viewBox="0 0 15 15"><circle cx="7.5" cy="7.5" r="6.1" fill="#fff" stroke="#4a4a4a" stroke-width="0.95"/></svg>
<svg style="left:836.5px;top:595.7px" width="15" height="15" viewBox="0 0 15 15"><circle cx="7.5" cy="7.5" r="6.1" fill="#fff" stroke="#4a4a4a" stroke-width="0.95"/><circle cx="7.5" cy="7.5" r="3.5" fill="#1a1a1a"/></svg>
<div style="left:997px;top:434px;width:94px;height:22px;background:#fff;border:1px solid #d9d9d9;"></div><div style="left:1074px;top:436px;width:15px;height:18px;background:#f0f0f0;border:1px solid #b8b8b8;"></div><svg style="left:1077.0px;top:442.2px" width="9" height="6" viewBox="0 0 9 6"><path d="M1 1 L4.5 5 L8 1" fill="none" stroke="#b8b8b8" stroke-width="1.35" stroke-linecap="butt"/></svg>
<div style="left:1126px;top:434px;width:124px;height:22px;background:#fff;border:1px solid #d9d9d9;"></div><svg style="left:1235.5px;top:437px" width="10" height="16" viewBox="0 0 10 16"><path d="M1.5 6.3 L5 2.6 L8.5 6.3 M1.5 9.7 L5 13.4 L8.5 9.7" fill="none" stroke="#b8b8b8" stroke-width="1.3"/></svg>
<div style="left:997px;top:592px;width:94px;height:22px;background:#fff;border:1px solid #abadb3;"></div><div style="left:1074px;top:594px;width:15px;height:18px;background:linear-gradient(#f3f3f3,#e6e6e6);border:1px solid #acacac;"></div><svg style="left:1077.0px;top:600.2px" width="9" height="6" viewBox="0 0 9 6"><path d="M1 1 L4.5 5 L8 1" fill="none" stroke="#484848" stroke-width="1.35" stroke-linecap="butt"/></svg>
<div style="left:1126px;top:592px;width:124px;height:22px;background:#fff;border:1px solid #abadb3;"></div><div style="left:1233px;top:594px;width:15px;height:18px;background:linear-gradient(#f3f3f3,#e6e6e6);border:1px solid #acacac;"></div><svg style="left:1235.5px;top:595px" width="10" height="16" viewBox="0 0 10 16"><path d="M1.5 6.3 L5 2.6 L8.5 6.3 M1.5 9.7 L5 13.4 L8.5 9.7" fill="none" stroke="#404040" stroke-width="1.3"/></svg>
<div style="left:937px;top:666px;width:313px;height:22px;background:#fff;border:1px solid #7eb4ea;"></div><div style="left:1233px;top:668px;width:15px;height:18px;background:linear-gradient(#f3f3f3,#e6e6e6);border:1px solid #acacac;"></div><svg style="left:1236.0px;top:674.2px" width="9" height="6" viewBox="0 0 9 6"><path d="M1 1 L4.5 5 L8 1" fill="none" stroke="#484848" stroke-width="1.35" stroke-linecap="butt"/></svg>
<div style="left:937px;top:692px;width:313px;height:22px;background:#fff;border:1px solid #abadb3;"></div><div style="left:1233px;top:694px;width:15px;height:18px;background:linear-gradient(#f3f3f3,#e6e6e6);border:1px solid #acacac;"></div><svg style="left:1236.0px;top:700.2px" width="9" height="6" viewBox="0 0 9 6"><path d="M1 1 L4.5 5 L8 1" fill="none" stroke="#484848" stroke-width="1.35" stroke-linecap="butt"/></svg>
<div style="left:937px;top:723.5px;width:13px;height:13px;background:#fff;border:1px solid #333;"></div><svg style="left:937px;top:723.5px" width="13" height="13" viewBox="0 0 13 13"><path d="M2.6 6.6 L5.2 9.6 L10.6 2.8" fill="none" stroke="#222" stroke-width="1.45"/></svg>
<div style="left:1188px;top:773px;width:75px;height:22px;background:linear-gradient(#f0f0f0,#e5e5e5);border:1px solid #acacac;"></div>
<span class="t" style="left:849.00px;top:3px;line-height:11px;height:11px;font-size:10.4px;color:#fff;font-weight:bold;letter-spacing:-0.070px;">Assembly:</span>
<span class="t" style="left:849.00px;top:19px;line-height:11px;height:11px;font-size:10.4px;color:#fff;font-weight:bold;letter-spacing:-0.233px;">Process Rev:</span>
<span class="t" style="left:849.00px;top:34px;line-height:11px;height:11px;font-size:10.4px;color:#fff;font-weight:bold;letter-spacing:-0.049px;">Release Status:</span>
<span class="t" style="left:929.70px;top:3px;line-height:11px;height:11px;font-size:10.4px;color:#fff;letter-spacing:0.188px;">10-210456 - 1.0</span>
<span class="t" style="left:929.70px;top:19px;line-height:11px;height:11px;font-size:10.4px;color:#fff;transform:scaleX(0.9514);transform-origin:0 0;">12</span>
<span class="t" style="left:929.70px;top:34px;line-height:11px;height:11px;font-size:10.4px;color:#fff;letter-spacing:0.263px;">Under Construction</span>
<span class="t" style="left:20.90px;top:67px;line-height:16px;height:16px;font-size:14.5px;color:#111;letter-spacing:0.038px;-webkit-text-stroke:0.18px #fff;">Process Definition</span>
<span class="t" style="left:57.50px;top:132px;line-height:14px;height:14px;font-size:12.5px;color:#000;font-weight:bold;letter-spacing:0.152px;">Reroutes</span>
<span class="t" style="left:57.50px;top:182px;line-height:14px;height:14px;font-size:12.5px;color:#000;font-weight:bold;letter-spacing:0.342px;">Editing - Repair</span>
<span class="t" style="left:48.00px;top:274px;line-height:12px;height:12px;font-size:11.5px;color:#1e1e1e;letter-spacing:0.168px;">All steps can be viewed in any order</span>
<span class="t" style="left:32.75px;top:309px;line-height:12px;height:12px;font-size:11.5px;color:#000;">Step List</span>
<span class="t" style="left:37.40px;top:365px;line-height:15px;height:15px;font-size:13px;color:#111;letter-spacing:0.213px;">Standard Step #1</span>
<span class="t" style="left:53.50px;top:397px;line-height:12px;height:12px;font-size:11.5px;color:#000;font-weight:bold;letter-spacing:0.229px;">Numeric Data Collection Activity #2</span>
<span class="t" style="left:53.50px;top:432px;line-height:12px;height:12px;font-size:11.5px;color:#000;font-weight:bold;letter-spacing:0.186px;">Numeric Range Data Collection Activity #3</span>
<span class="t" style="left:53.50px;top:467px;line-height:12px;height:12px;font-size:11.5px;color:#000;font-weight:bold;letter-spacing:0.160px;">True/False Data Collection Activity #4</span>
<span class="t" style="left:53.50px;top:502px;line-height:12px;height:12px;font-size:11.5px;color:#000;font-weight:bold;letter-spacing:0.248px;">Date/Time Range Data Collection Activity #4</span>
<span class="t" style="left:28.00px;top:831px;line-height:12px;height:12px;font-size:11.5px;color:#0000ff;letter-spacing:0.418px;text-decoration:underline;">Import Log</span>
<span class="t" style="left:359.50px;top:71px;line-height:12px;height:12px;font-size:11.5px;color:#1e1e1e;letter-spacing:0.231px;">Document Tools</span>
<span class="t" style="left:366.60px;top:141px;line-height:12px;height:12px;font-size:11.5px;color:#1e1e1e;letter-spacing:0.192px;">New</span>
<span class="t" style="left:411.60px;top:141px;line-height:12px;height:12px;font-size:11.5px;color:#1e1e1e;letter-spacing:-0.148px;">From</span>
<span class="t" style="left:401.60px;top:155px;line-height:12px;height:12px;font-size:11.5px;color:#1e1e1e;letter-spacing:0.104px;">Template</span>
<span class="t" style="left:459.00px;top:141px;line-height:12px;height:12px;font-size:11.5px;color:#1e1e1e;letter-spacing:-0.115px;">From</span>
<span class="t" style="left:465.00px;top:155px;line-height:12px;height:12px;font-size:11.5px;color:#1e1e1e;transform:scaleX(0.9412);transform-origin:0 0;">V7</span>
<span class="t" style="left:363.00px;top:174px;line-height:12px;height:12px;font-size:11.5px;color:#1e1e1e;letter-spacing:0.200px;">Create Work Instruction</span>
<span class="t" style="left:500.60px;top:141px;line-height:12px;height:12px;font-size:11.5px;color:#1e1e1e;letter-spacing:0.278px;">Import From</span>
<span class="t" style="left:506.00px;top:155px;line-height:12px;height:12px;font-size:11.5px;color:#1e1e1e;letter-spacing:0.368px;">Document</span>
<span class="t" style="left:583.50px;top:141px;line-height:12px;height:12px;font-size:11.5px;color:#1e1e1e;letter-spacing:-0.122px;">Link To</span>
<span class="t" style="left:574.40px;top:155px;line-height:12px;height:12px;font-size:11.5px;color:#1e1e1e;letter-spacing:0.311px;">Document</span>
<span class="t" style="left:655.60px;top:107px;line-height:12px;height:12px;font-size:11.5px;color:#1e1e1e;letter-spacing:0.074px;">From Library</span>
<span class="t" style="left:655.60px;top:130px;line-height:12px;height:12px;font-size:11.5px;color:#1e1e1e;letter-spacing:-0.037px;">From Any Process</span>
<span class="t" style="left:655.60px;top:153px;line-height:12px;height:12px;font-size:11.5px;color:#1e1e1e;letter-spacing:-0.233px;">From URL</span>
<span class="t" style="left:592.00px;top:174px;line-height:12px;height:12px;font-size:11.5px;color:#1e1e1e;letter-spacing:0.174px;">Add Element</span>
<span class="t" style="left:762.50px;top:141px;line-height:12px;height:12px;font-size:11.5px;color:#1e1e1e;letter-spacing:0.050px;">Delete</span>
<span class="t" style="left:803.75px;top:141px;line-height:12px;height:12px;font-size:11.5px;color:#1e1e1e;letter-spacing:0.016px;">Mark as</span>
<span class="t" style="left:804.40px;top:155px;line-height:12px;height:12px;font-size:11.5px;color:#1e1e1e;letter-spacing:-0.038px;">Primary</span>
<span class="t" style="left:771.25px;top:174px;line-height:12px;height:12px;font-size:11.5px;color:#1e1e1e;letter-spacing:0.036px;">Edit Element</span>
<span class="t" style="left:1115.40px;top:127px;line-height:12px;height:12px;font-size:11.5px;color:#000;letter-spacing:0.101px;">Circuit</span>
<span class="t" style="left:1115.40px;top:143px;line-height:12px;height:12px;font-size:11.5px;color:#000;letter-spacing:0.496px;">Mapping</span>
<span class="t" style="left:1180.00px;top:127px;line-height:12px;height:12px;font-size:11.5px;color:#000;letter-spacing:0.228px;">Material</span>
<span class="t" style="left:1180.00px;top:143px;line-height:12px;height:12px;font-size:11.5px;color:#000;letter-spacing:-0.016px;">Setup</span>
<span class="t" style="left:1240.50px;top:127px;line-height:12px;height:12px;font-size:11.5px;color:#000;letter-spacing:0.054px;">Entry / Exit</span>
<span class="t" style="left:388.75px;top:272px;line-height:19px;height:19px;font-size:17px;color:#111;letter-spacing:-0.527px;-webkit-text-stroke:0.3px #c1cdd6;">Settings</span>
<span class="t" style="left:395.00px;top:304px;line-height:12px;height:12px;font-size:11.5px;color:#1a1a1a;font-weight:bold;letter-spacing:0.183px;">Instruction</span>
<span class="t" style="left:480.20px;top:304px;line-height:12px;height:12px;font-size:11.5px;color:#1e1e1e;letter-spacing:0.161px;">Activity Details</span>
<span class="t" style="left:576.50px;top:304px;line-height:12px;height:12px;font-size:11.5px;color:#1e1e1e;letter-spacing:0.068px;">Part Assignments</span>
<span class="t" style="left:413.50px;top:338px;line-height:12px;height:12px;font-size:11.5px;color:#1e1e1e;letter-spacing:0.056px;">Is Activity Required?</span>
<span class="t" style="left:389.50px;top:377px;line-height:19px;height:19px;font-size:17px;color:#111;letter-spacing:0.046px;-webkit-text-stroke:0.26px #fff;">Collect a Date / Time - Starting</span>
<span class="t" style="left:389.50px;top:412px;line-height:12px;height:12px;font-size:11.5px;color:#1a1a1a;font-weight:bold;letter-spacing:0.180px;">Header</span>
<span class="t" style="left:467.80px;top:412px;line-height:12px;height:12px;font-size:11.5px;color:#1e1e1e;letter-spacing:0.041px;">Start Range Header</span>
<span class="t" style="left:389.50px;top:451px;line-height:19px;height:19px;font-size:17px;color:#111;letter-spacing:0.030px;-webkit-text-stroke:0.26px #fff;">Collect a Date / Time - Ending</span>
<span class="t" style="left:389.50px;top:486px;line-height:12px;height:12px;font-size:11.5px;color:#1a1a1a;font-weight:bold;letter-spacing:0.180px;">Header</span>
<span class="t" style="left:467.80px;top:486px;line-height:12px;height:12px;font-size:11.5px;color:#1e1e1e;">End Range Header</span>
<span class="t" style="left:389.50px;top:525px;line-height:14px;height:14px;font-size:12.7px;color:#111;letter-spacing:0.249px;-webkit-text-stroke:0.1px #fff;">Format of Date and Time</span>
<span class="t" style="left:389.50px;top:555px;line-height:12px;height:12px;font-size:11.5px;color:#1e1e1e;letter-spacing:-0.078px;">Precision:</span>
<span class="t" style="left:467.40px;top:555px;line-height:12px;height:12px;font-size:11.5px;color:#1e1e1e;letter-spacing:0.034px;">Date</span>
<span class="t" style="left:389.40px;top:620px;line-height:14px;height:14px;font-size:12.7px;color:#111;letter-spacing:0.114px;-webkit-text-stroke:0.1px #fff;">Logic</span>
<span class="t" style="left:389.40px;top:650px;line-height:12px;height:12px;font-size:11.5px;color:#1e1e1e;letter-spacing:0.087px;">Requirement:</span>
<span class="t" style="left:480.20px;top:650px;line-height:12px;height:12px;font-size:11.5px;color:#1e1e1e;letter-spacing:0.125px;">Require Ending Date is later than Starting Date</span>
<span class="t" style="left:837.50px;top:377px;line-height:16px;height:16px;font-size:14.5px;color:#111;letter-spacing:0.233px;-webkit-text-stroke:0.18px #fff;">Limit the Input Range</span>
<span class="t" style="left:855.30px;top:409px;line-height:12px;height:12px;font-size:11.5px;color:#1e1e1e;letter-spacing:0.402px;">No Limit</span>
<span class="t" style="left:855.30px;top:440px;line-height:12px;height:12px;font-size:11.5px;color:#1e1e1e;letter-spacing:0.092px;">Limit Range</span>
<span class="t" style="left:937.40px;top:440px;line-height:12px;height:12px;font-size:11.5px;color:#1e1e1e;letter-spacing:0.019px;">Limit Type:</span>
<span class="t" style="left:1000.60px;top:440px;line-height:12px;height:12px;font-size:11.5px;color:#1e1e1e;letter-spacing:0.370px;">Minutes</span>
<span class="t" style="left:1095.30px;top:440px;line-height:12px;height:12px;font-size:11.5px;color:#1e1e1e;letter-spacing:0.123px;">Limit:</span>
<span class="t" style="left:1220.80px;top:440px;line-height:12px;height:12px;font-size:11.5px;color:#b0b0b0;transform:scaleX(0.9678);transform-origin:0 0;">0</span>
<span class="t" style="left:837.50px;top:535px;line-height:16px;height:16px;font-size:14.5px;color:#111;letter-spacing:0.292px;-webkit-text-stroke:0.18px #fff;">Validate the Information</span>
<span class="t" style="left:855.30px;top:567px;line-height:12px;height:12px;font-size:11.5px;color:#1e1e1e;letter-spacing:0.303px;">No Validation</span>
<span class="t" style="left:855.30px;top:598px;line-height:12px;height:12px;font-size:11.5px;color:#1e1e1e;letter-spacing:0.079px;">Validate Value</span>
<span class="t" style="left:937.40px;top:598px;line-height:12px;height:12px;font-size:11.5px;color:#1e1e1e;letter-spacing:0.019px;">Limit Type:</span>
<span class="t" style="left:1000.60px;top:598px;line-height:12px;height:12px;font-size:11.5px;color:#1e1e1e;letter-spacing:0.370px;">Minutes</span>
<span class="t" style="left:1095.30px;top:598px;line-height:12px;height:12px;font-size:11.5px;color:#1e1e1e;letter-spacing:0.123px;">Limit:</span>
<span class="t" style="left:1220.80px;top:598px;line-height:12px;height:12px;font-size:11.5px;color:#1e1e1e;transform:scaleX(0.9678);transform-origin:0 0;">2</span>
<span class="t" style="left:837.50px;top:642px;line-height:14px;height:14px;font-size:12.7px;color:#111;-webkit-text-stroke:0.1px #fff;">Failed Validation</span>
<span class="t" style="left:837.50px;top:672px;line-height:12px;height:12px;font-size:11.5px;color:#1e1e1e;letter-spacing:0.306px;">Action</span>
<span class="t" style="left:942.80px;top:672px;line-height:12px;height:12px;font-size:11.5px;color:#1e1e1e;letter-spacing:-0.089px;">Re-Route Pathway</span>
<span class="t" style="left:837.50px;top:698px;line-height:12px;height:12px;font-size:11.5px;color:#1e1e1e;letter-spacing:-0.102px;">Re-Route Pathway</span>
<span class="t" style="left:942.80px;top:698px;line-height:12px;height:12px;font-size:11.5px;color:#1e1e1e;letter-spacing:-0.075px;">Re-Route Point 1</span>
<span class="t" style="left:954.60px;top:724px;line-height:12px;height:12px;font-size:11.5px;color:#1e1e1e;letter-spacing:0.196px;">Immediately Fail the product when measurement fails</span>
<span class="t" style="left:1217.60px;top:778px;line-height:12px;height:12px;font-size:11.5px;color:#1e1e1e;transform:scaleX(0.9263);transform-origin:0 0;">OK</span>
<span class="t" style="left:48.60px;top:13px;line-height:27px;height:27px;font-size:24px;color:#f4f7f9;transform:scaleX(1.1248);transform-origin:0 0;-webkit-text-stroke:0.45px #1b2f3f;">Factory</span>
<span class="t" style="left:143.70px;top:13px;line-height:27px;height:27px;font-size:24px;color:#ffffff;transform:scaleX(1.1381);transform-origin:0 0;-webkit-text-stroke:0.35px #fff;">Logix</span>
<span class="t" style="left:211.00px;top:19px;line-height:4px;height:4px;font-size:3.5px;color:#8fa0ad;transform:scaleX(0.8889);transform-origin:0 0;">TM</span>
</body></html>
